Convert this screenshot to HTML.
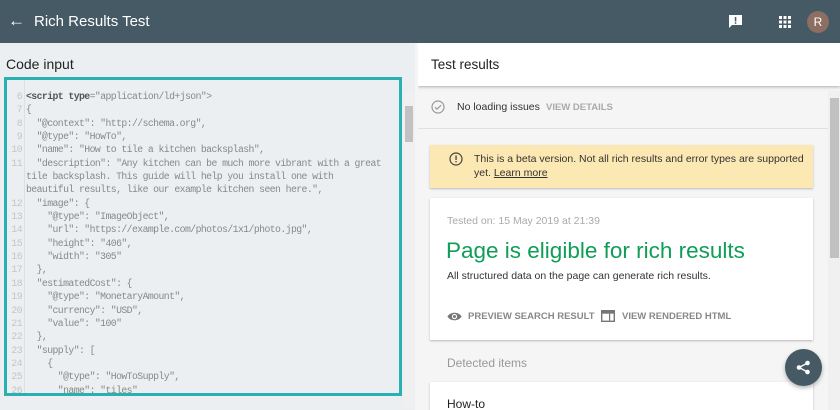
<!DOCTYPE html>
<html><head><style>
*{margin:0;padding:0;box-sizing:border-box}
html,body{width:840px;height:410px;overflow:hidden}
body{position:relative;font-family:"Liberation Sans",sans-serif;background:#f5f5f5}
.hdr{position:absolute;left:0;top:0;width:840px;height:43px;background:#455a64;color:#fff}
.left{position:absolute;left:0;top:43px;width:415px;height:367px;background:#eceff1}
.right{position:absolute;left:418px;top:43px;width:422px;height:367px;background:#f5f5f5;overflow:hidden}
.code{position:absolute;left:4px;top:77px;width:398px;height:319px;border:3px solid #2ab0b0;background:#eceff1;overflow:hidden}
.gut{position:absolute;left:17px;top:0;width:1px;height:400px;background:#dde0e2}
pre{position:absolute;left:19px;top:10px;font-family:"Liberation Mono",monospace;font-size:9.8px;letter-spacing:-0.58px;line-height:13.35px;color:#888;white-space:pre}
.nums{position:absolute;left:0;top:10px;width:15px;text-align:right;font-family:"Liberation Mono",monospace;font-size:9.8px;letter-spacing:-0.58px;line-height:13.35px;color:#c4c4c4;white-space:pre}
.card{position:absolute;background:#fff;box-shadow:0 1px 2px rgba(0,0,0,.25)}
</style></head><body>
<div class="hdr">
 <div style="position:absolute;left:8px;top:11px;font-size:17px">&#8592;</div>
 <div style="position:absolute;left:34px;top:13px;font-size:15px">Rich Results Test</div>
 <svg style="position:absolute;left:728px;top:14px" width="15" height="15" viewBox="0 0 15 15"><path d="M1 1h13v10H4l-3 3z" fill="#fff"/><rect x="6.8" y="3" width="1.5" height="4.5" fill="#455a64"/><rect x="6.8" y="8.3" width="1.5" height="1.5" fill="#455a64"/></svg>
 <svg style="position:absolute;left:779px;top:16px" width="12" height="12"><g fill="#fff"><rect x="0" y="0" width="3" height="3"/><rect x="4.5" y="0" width="3" height="3"/><rect x="9" y="0" width="3" height="3"/><rect x="0" y="4.5" width="3" height="3"/><rect x="4.5" y="4.5" width="3" height="3"/><rect x="9" y="4.5" width="3" height="3"/><rect x="0" y="9" width="3" height="3"/><rect x="4.5" y="9" width="3" height="3"/><rect x="9" y="9" width="3" height="3"/></g></svg>
 <div style="position:absolute;left:807px;top:11px;width:22px;height:22px;border-radius:50%;background:#8d6e63;color:#fff;font-size:12px;text-align:center;line-height:22px">R</div>
</div>
<div class="left">
 <div style="position:absolute;left:6px;top:13px;font-size:14px;color:#222">Code input</div>
 <div style="position:absolute;left:404px;top:48px;width:10px;height:318px;background:#f0f0f0"></div>
 <div style="position:absolute;left:405px;top:63px;width:8px;height:36px;background:#c1c1c1"></div>
</div>
<div class="code">
 <div class="gut"></div>
 <div class="nums">6
7
8
9
10
11


12
13
14
15
16
17
18
19
20
21
22
23
24
25
26
27</div>
<pre><b style="color:#555">&lt;script type</b>=<span>"application/ld+json"</span>&gt;
{
  "@context": "http://schema.org",
  "@type": "HowTo",
  "name": "How to tile a kitchen backsplash",
  "description": "Any kitchen can be much more vibrant with a great
tile backsplash. This guide will help you install one with
beautiful results, like our example kitchen seen here.",
  "image": {
    "@type": "ImageObject",
    "url": "https://example.com/photos/1x1/photo.jpg",
    "height": "406",
    "width": "305"
  },
  "estimatedCost": {
    "@type": "MonetaryAmount",
    "currency": "USD",
    "value": "100"
  },
  "supply": [
    {
      "@type": "HowToSupply",
      "name": "tiles"
    }, {</pre>
</div>
<div class="right">
 <div style="position:absolute;left:0;top:0;width:422px;height:43px;background:#fff;box-shadow:0 1px 3px rgba(0,0,0,.3)"></div>
 <div style="position:absolute;left:13px;top:14px;font-size:13.5px;color:#222">Test results</div>
 <div style="position:absolute;left:410px;top:48px;width:12px;height:319px;background:#f0f0f0"></div>
 <div style="position:absolute;left:412px;top:55px;width:9px;height:160px;background:#c1c1c1"></div>
 <svg style="position:absolute;left:13px;top:57px" width="14" height="14"><circle cx="7" cy="7" r="6" fill="none" stroke="#999" stroke-width="1.2"/><path d="M4 7.2l2 2 4-4" fill="none" stroke="#999" stroke-width="1.2"/></svg>
 <div style="position:absolute;left:39px;top:58px;font-size:10.5px;color:#333">No loading issues</div>
 <div style="position:absolute;left:128px;top:59px;font-size:9.5px;color:#aaa;font-weight:bold">VIEW DETAILS</div>
 <div style="position:absolute;left:0;top:85px;width:410px;height:1px;background:#e0e0e0"></div>
 <div class="card" style="left:12px;top:102px;width:383px;height:43px;background:#fce8b2"></div>
 <svg style="position:absolute;left:31px;top:109px" width="14" height="14"><circle cx="7" cy="7" r="6" fill="none" stroke="#444" stroke-width="1.2"/><rect x="6.4" y="3.5" width="1.3" height="4.5" fill="#444"/><rect x="6.4" y="9" width="1.3" height="1.3" fill="#444"/></svg>
 <div style="position:absolute;left:56px;top:110px;font-size:10.5px;color:#333;line-height:13.5px">This is a beta version. Not all rich results and error types are supported<br>yet. <u>Learn more</u></div>
 <div class="card" style="left:12px;top:155px;width:383px;height:142px"></div>
 <div style="position:absolute;left:29px;top:172px;font-size:10.5px;color:#aaa">Tested on: 15 May 2019 at 21:39</div>
 <div style="position:absolute;left:28px;top:195px;font-size:22.5px;color:#0f9d58">Page is eligible for rich results</div>
 <div style="position:absolute;left:29px;top:227px;font-size:10.5px;color:#333">All structured data on the page can generate rich results.</div>
 <svg style="position:absolute;left:29px;top:268px" width="15" height="11"><path d="M0.5 5.5C3 0.5 12 0.5 14.5 5.5C12 10.5 3 10.5 0.5 5.5z" fill="#777"/><circle cx="7.5" cy="5.5" r="2.6" fill="#fff"/><circle cx="7.5" cy="5.5" r="1.5" fill="#777"/></svg>
 <div style="position:absolute;left:50px;top:268px;font-size:9.5px;color:#888;font-weight:bold">PREVIEW SEARCH RESULT</div>
 <svg style="position:absolute;left:183px;top:267px" width="14" height="12"><rect x="0.7" y="0.7" width="12.6" height="10.6" fill="none" stroke="#777" stroke-width="1.4"/><rect x="0.7" y="0.7" width="12.6" height="3" fill="#777"/><rect x="8" y="3.7" width="1.2" height="7" fill="#777"/></svg>
 <div style="position:absolute;left:204px;top:268px;font-size:9.5px;color:#888;font-weight:bold">VIEW RENDERED HTML</div>
 <div style="position:absolute;left:29px;top:313px;font-size:12px;color:#999">Detected items</div>
 <div class="card" style="left:12px;top:339px;width:383px;height:28px"></div>
 <div style="position:absolute;left:29px;top:354px;font-size:12px;color:#222">How-to</div>
 <div style="position:absolute;left:367px;top:306px;width:37px;height:37px;border-radius:50%;background:#455a64;box-shadow:0 2px 4px rgba(0,0,0,.3)"></div>
 <svg style="position:absolute;left:378px;top:317px" width="15" height="15"><circle cx="11.5" cy="3" r="2.3" fill="#fff"/><circle cx="3" cy="7.5" r="2.3" fill="#fff"/><circle cx="11.5" cy="12" r="2.3" fill="#fff"/><path d="M11.5 3L3 7.5l8.5 4.5" fill="none" stroke="#fff" stroke-width="1.3"/></svg>
</div>
</body></html>
